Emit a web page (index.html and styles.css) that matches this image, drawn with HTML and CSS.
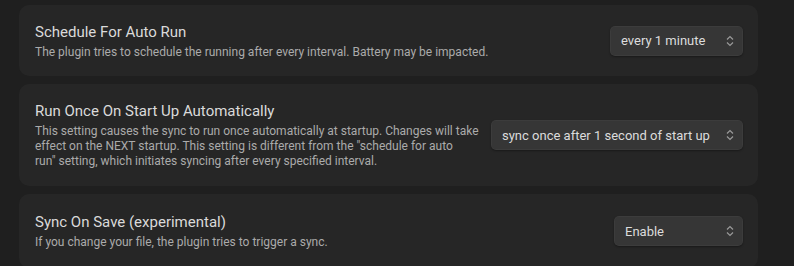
FILE: index.html
```html
<!DOCTYPE html>
<html>
<head>
<meta charset="utf-8">
<link rel="stylesheet" href="styles.css">
</head>
<body>
<div class="list">
  <div class="item">
    <div class="info">
      <div class="name">Schedule For Auto Run</div>
      <div class="desc">The plugin tries to schedule the running after every interval. Battery may be impacted.</div>
    </div>
    <div class="control">
      <div class="select s1"><span>every 1 minute</span><svg class="chev" width="8" height="12" viewBox="0 0 8 12"><path d="M1 4.5 L4 1.5 L7 4.5 M1 7.5 L4 10.5 L7 7.5" fill="none" stroke="#9a9a9a" stroke-width="1.2"/></svg></div>
    </div>
  </div>
  <div class="item">
    <div class="info">
      <div class="name">Run Once On Start Up Automatically</div>
      <div class="desc">This setting causes the sync to run once automatically at startup. Changes will take effect on the NEXT startup. This setting is different from the "schedule for auto<br>run" setting, which initiates syncing after every specified interval.</div>
    </div>
    <div class="control">
      <div class="select s2"><span>sync once after 1 second of start up</span><svg class="chev" width="8" height="12" viewBox="0 0 8 12"><path d="M1 4.5 L4 1.5 L7 4.5 M1 7.5 L4 10.5 L7 7.5" fill="none" stroke="#9a9a9a" stroke-width="1.2"/></svg></div>
    </div>
  </div>
  <div class="item">
    <div class="info">
      <div class="name">Sync On Save (experimental)</div>
      <div class="desc">If you change your file, the plugin tries to trigger a sync.</div>
    </div>
    <div class="control">
      <div class="select s3"><span>Enable</span><svg class="chev" width="8" height="12" viewBox="0 0 8 12"><path d="M1 4.5 L4 1.5 L7 4.5 M1 7.5 L4 10.5 L7 7.5" fill="none" stroke="#9a9a9a" stroke-width="1.2"/></svg></div>
    </div>
  </div>
</div>
</body>
</html>
```
FILE: styles.css
```css
html, body {
  margin: 0;
  padding: 0;
  background: #1f1f1f;
  font-family: Roboto, "Noto Sans", sans-serif;
  overflow: hidden;
}
.list {
  display: flex;
  flex-direction: column;
  gap: 8px;
  padding: 5px 36px 0 19px;
}
.item {
  background: #262626;
  border-radius: 10px;
  display: flex;
  align-items: center;
  padding: 0 15px 0 16px;
  gap: 10px;
}
.item:nth-child(1) { height: 71px; }
.item:nth-child(2) { height: 102px; }
.item:nth-child(3) { height: 74px; }
.info {
  flex: 1;
  min-width: 0;
}
.name {
  color: #dadada;
  font-size: 15px;
  line-height: 20px;
  margin-bottom: 3px;
}
.desc {
  color: #ababab;
  font-size: 12px;
  line-height: 15px;
}
.control {
  flex: none;
}
.select {
  background: #363636;
  border-radius: 5px;
  height: 30px;
  box-sizing: border-box;
  display: flex;
  align-items: center;
  justify-content: space-between;
  padding: 0 9px 0 11px;
  color: #dcdcdc;
  font-size: 13px;
  box-shadow: 0 1px 2px rgba(0,0,0,0.35), inset 0 0 0 1px rgba(255,255,255,0.03);
}
.s1 { width: 133px; }
.s2 { width: 252px; }
.s3 { width: 129px; }
.chev { display: block; }
```
